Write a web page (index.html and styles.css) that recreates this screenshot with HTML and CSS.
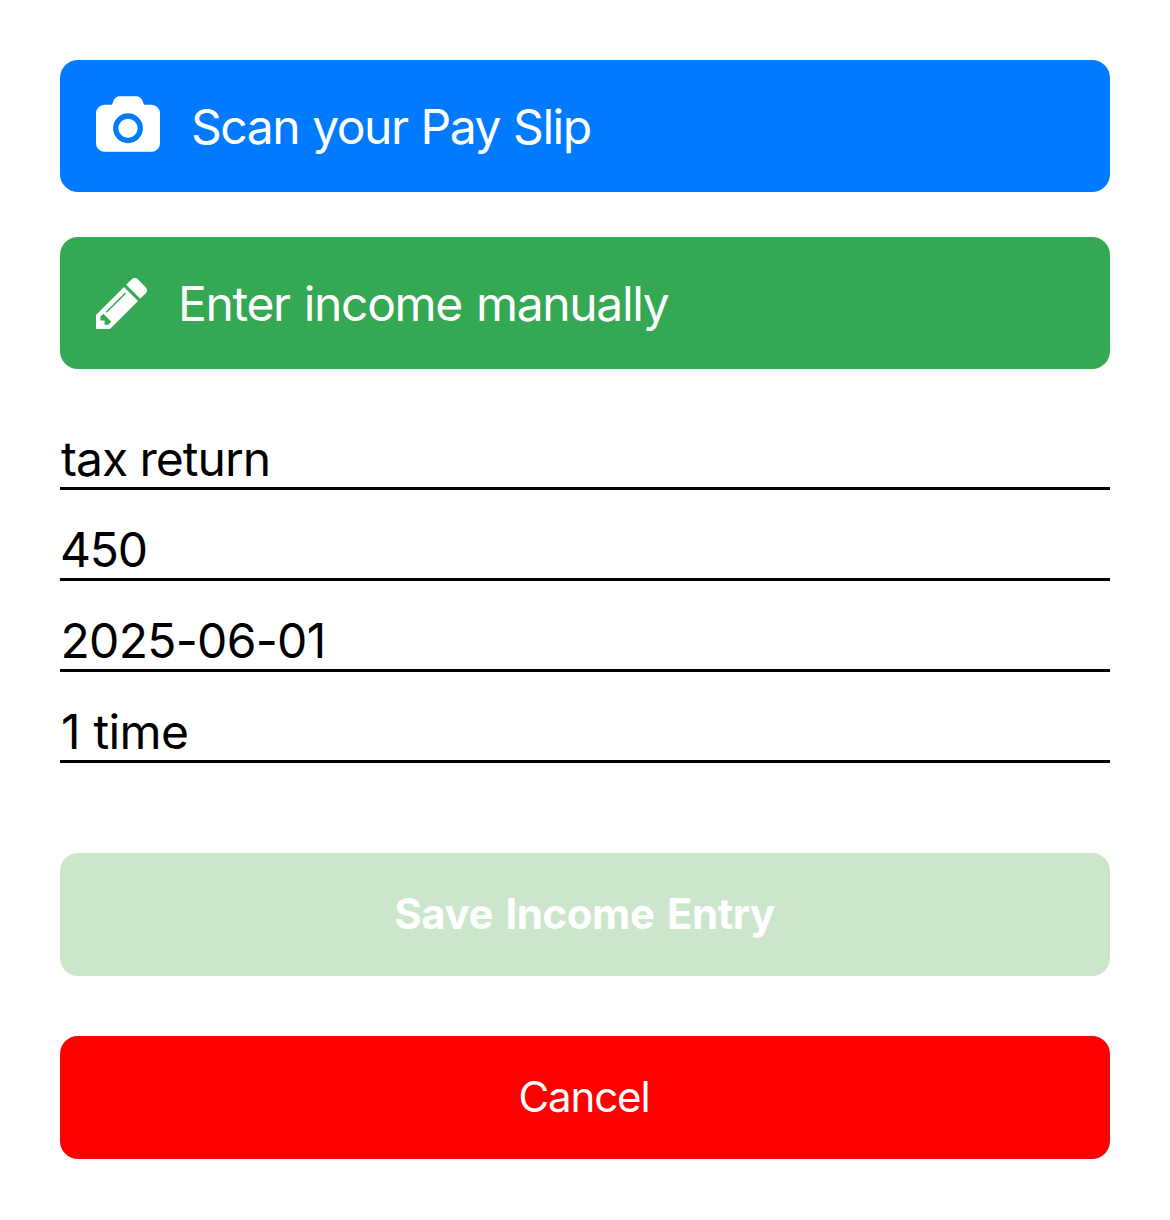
FILE: index.html
```html
<!DOCTYPE html>
<html lang="en">
<head>
<meta charset="utf-8">
<title>Add income</title>
<link rel="stylesheet" href="styles.css">
</head>
<body>
<main class="screen">
  <button class="action action-scan" type="button">
    <svg class="icon-camera" viewBox="0 0 1920 1664" aria-hidden="true"><path fill="#fff" d="M960 672q119 0 203.500 84.500t84.500 203.500-84.500 203.500-203.500 84.500-203.500-84.500-84.500-203.500 84.500-203.500 203.500-84.500zM1664 256q106 0 181 75t75 181v896q0 106-75 181t-181 75h-1408q-106 0-181-75t-75-181v-896q0-106 75-181t181-75h224l51-136q19-49 69.500-84.500t103.500-35.500h512q53 0 103.500 35.500t69.500 84.500l51 136h224zM960 1408q185 0 316.500-131.500t131.500-316.500-131.500-316.500-316.500-131.500-316.500 131.500-131.500 316.500 131.500 316.500 316.500 131.500z"/></svg>
    <span class="label-scan">Scan your Pay Slip</span>
  </button>
  <button class="action action-manual" type="button">
    <svg class="icon-pencil" viewBox="0 149 1515 1515" aria-hidden="true"><path fill="#fff" d="M363 1536l91-91-235-235-91 91v107h128v128h107zM886 608q0-22-22-22-10 0-17 7l-542 542q-7 7-7 17 0 22 22 22 10 0 17-7l542-542q7-7 7-17zM832 416l416 416-832 832h-416v-416zM1515 512q0 53-37 90l-166 166-416-416 166-165q36-38 90-38 53 0 91 38l235 234q37 39 37 91z"/></svg>
    <span class="label-manual">Enter income manually</span>
  </button>
  <div class="fields">
    <div class="field field-name">tax return</div>
    <div class="field field-amount">450</div>
    <div class="field field-date">2025-06-01</div>
    <div class="field field-repeat">1 time</div>
  </div>
  <button class="submit save" type="button">Save Income Entry</button>
  <button class="submit cancel" type="button">Cancel</button>
</main>
</body>
</html>
```
FILE: styles.css
```css
* { box-sizing: border-box; }
body { margin: 0; background: #fff; font-family: Inter, "Liberation Sans", sans-serif; }
.screen { display: flex; flex-direction: column; padding: 60px; }
button { border: 0; border-radius: 18px; color: #fff; font-family: inherit; }
.action { display: flex; align-items: center; height: 132px; padding: 0 36px; font-size: 48px; margin-bottom: 45px; }
.action-scan { background: #007bff; }
.action-manual { background: #34a853; }
.icon-camera { width: 64px; height: 56px; margin: 0 31px 4px 0; }
.icon-pencil { width: 51px; height: 51px; margin-right: 31px; }
.label-scan { letter-spacing: -1.45px; word-spacing: .9px; }
.label-manual { letter-spacing: -1.35px; word-spacing: 1.9px; }
.fields { display: flex; flex-direction: column; margin-top: -15px; }
.field { height: 91px; border-bottom: 3px solid #000; font-size: 48px; line-height: 58px; padding: 31px 0 0 1px; white-space: nowrap; }
.field-name { letter-spacing: -1px; }
.field-amount { letter-spacing: -1.2px; padding-left: 0; }
.field-date { letter-spacing: -.7px; padding-left: .5px; }
.field-repeat { letter-spacing: -.6px; word-spacing: .6px; }
.submit { height: 123px; font-size: 42px; padding: 0 1px 2px 0; }
.save { background: #cce6cc; font-weight: 700; letter-spacing: -.45px; word-spacing: 3px; margin: 90px 0 60px; }
.cancel { background: #f00; letter-spacing: -1.1px; padding-right: 2px; }
```
